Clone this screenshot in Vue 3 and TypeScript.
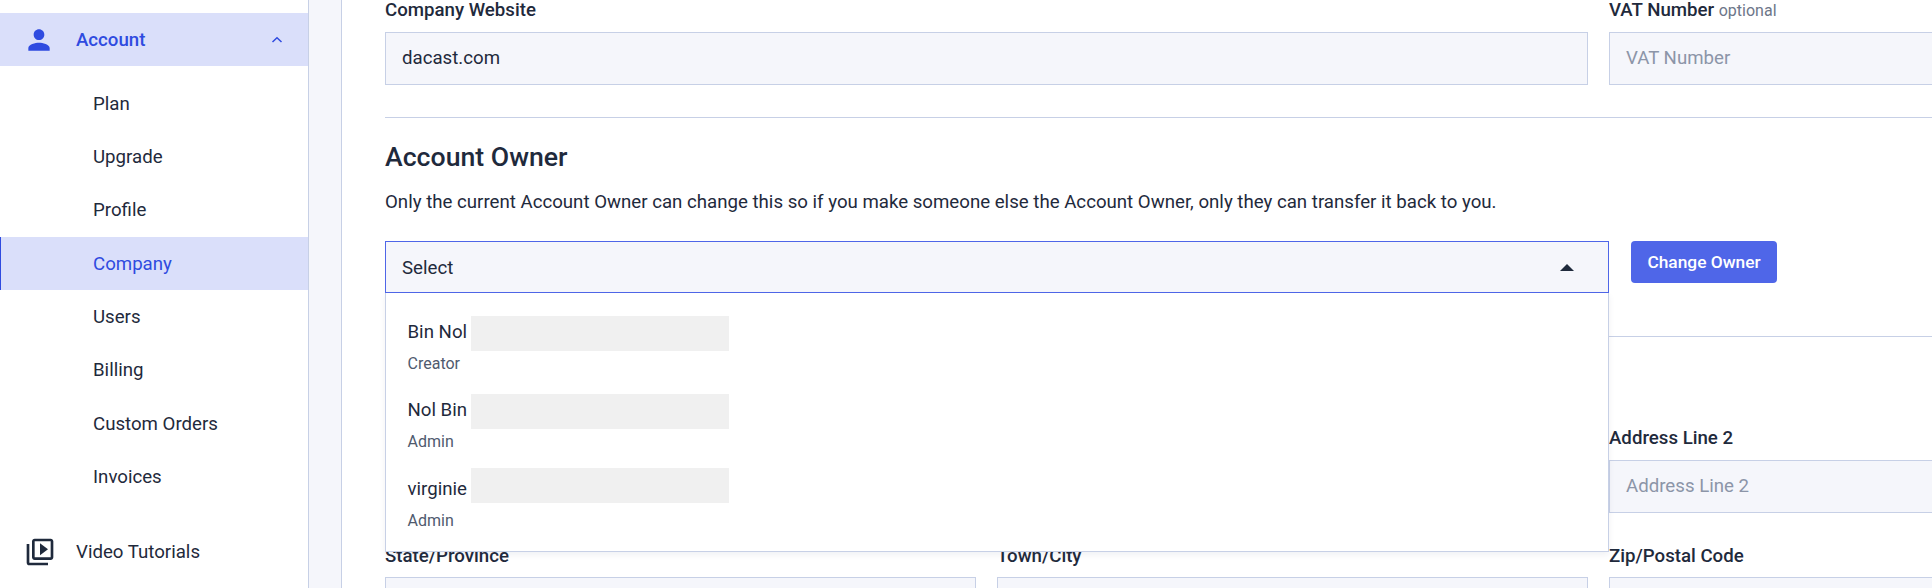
<script setup lang="ts">
const subItems: { label: string; active?: boolean }[] = [
  { label: 'Plan' },
  { label: 'Upgrade' },
  { label: 'Profile' },
  { label: 'Company', active: true },
  { label: 'Users' },
  { label: 'Billing' },
  { label: 'Custom Orders' },
  { label: 'Invoices' },
]
const owners = [
  { name: 'Bin Nol', role: 'Creator' },
  { name: 'Nol Bin', role: 'Admin' },
  { name: 'virginie', role: 'Admin' },
]
</script>

<template>
  <div class="page">
    <aside class="sidebar">
      <div class="nav-head">
        <svg class="nav-icon" viewBox="0 0 24 24" width="32" height="32" fill="#2f4be0"><path d="M12 12c2.210 0 4-1.790 4-4s-1.790-4-4-4-4 1.790-4 4 1.790 4 4 4zm0 2c-2.670 0-8 1.340-8 4v2h16v-2c0-2.660-5.330-4-8-4z" /></svg>
        <span class="nav-head-label">Account</span>
        <svg class="chev" viewBox="0 0 12 8" width="12" height="8" fill="none" stroke="#2f4be0" stroke-width="1.500"><path d="M1.500 6 6 1.800 10.500 6" /></svg>
      </div>
      <div class="sub-list">
        <div v-for="item in subItems" :key="item.label" class="sub" :class="{ 'sub-active': item.active }">{{ item.label }}</div>
      </div>
      <div class="nav-foot">
        <svg class="nav-icon" viewBox="0 0 24 24" width="32" height="32" fill="#1f2a3c"><path d="M4 6H2v14c0 1.100.9 2 2 2h14v-2H4V6zm16-4H8c-1.100 0-2 .9-2 2v12c0 1.100.9 2 2 2h12c1.100 0 2-.9 2-2V4c0-1.100-.9-2-2-2zm0 14H8V4h12v12zM12 5.500v9l6-4.500-6-4.500z" /></svg>
        <span>Video Tutorials</span>
      </div>
    </aside>
    <div class="gutter"></div>
    <main class="main">
      <div class="row">
        <div class="field wide">
          <label class="label">Company Website</label>
          <div class="input">dacast.com</div>
        </div>
        <div class="field rest">
          <label class="label">VAT Number <span class="opt">optional</span></label>
          <div class="input ph">VAT Number</div>
        </div>
      </div>
      <hr class="rule first" />
      <h2 class="title">Account Owner</h2>
      <p class="desc">Only the current Account Owner can change this so if you make someone else the Account Owner, only they can transfer it back to you.</p>
      <div class="owner-row">
        <div class="select-wrap">
          <div class="select">
            <span>Select</span>
            <svg viewBox="0 0 14 7" width="14" height="7" fill="#1f2a3c"><path d="M7 0 14 7H0z" /></svg>
          </div>
          <div class="menu">
            <div v-for="o in owners" :key="o.name" class="opt-item">
              <div class="opt-name">{{ o.name }}</div>
              <div class="opt-role">{{ o.role }}</div>
              <span class="mask"></span>
            </div>
          </div>
        </div>
        <button class="btn">Change Owner</button>
      </div>
      <hr class="rule second" />
      <div class="row addr">
        <div class="field half"></div>
        <div class="field half"></div>
        <div class="field rest">
          <label class="label">Address Line 2</label>
          <div class="input ph">Address Line 2</div>
        </div>
      </div>
      <div class="row last">
        <div class="field half">
          <label class="label">State/Province</label>
          <div class="input"></div>
        </div>
        <div class="field half">
          <label class="label">Town/City</label>
          <div class="input"></div>
        </div>
        <div class="field rest">
          <label class="label">Zip/Postal Code</label>
          <div class="input"></div>
        </div>
      </div>
    </main>
  </div>
</template>

<style>
html, body { margin: 0; background: #fff; overflow: hidden; }
</style>

<style scoped>
.page {
  display: flex;
  width: 1932px;
  height: 588px;
  overflow: hidden;
  font-family: Roboto, "Liberation Sans", sans-serif;
  font-size: 18.670px;
  color: #1f2a3c;
  background: #fff;
}
.sidebar {
  flex: 0 0 309px;
  box-sizing: border-box;
  padding-top: 13px;
  border-right: 1px solid #c7d0e6;
  background: #fff;
}
.gutter {
  flex: 0 0 32px;
  background: #f5f6fb;
  border-right: 1px solid #c7d0e6;
}
.nav-head {
  display: flex;
  align-items: center;
  height: 53px;
  padding-left: 23px;
  background: #dadffa;
  color: #2f4be0;
  font-weight: 500;
}
.nav-icon { flex: none; }
.nav-head-label { margin-left: 21px; flex: 1; }
.chev { margin-right: 25px; }
.sub-list { margin-top: 11px; }
.sub {
  display: flex;
  align-items: center;
  box-sizing: border-box;
  height: 53.330px;
  padding-left: 93px;
}
.sub-active {
  background: #dadffa;
  color: #2f4be0;
  border-left: 1px solid #2f4be0;
  padding-left: 92px;
}
.nav-foot {
  display: flex;
  align-items: center;
  height: 53px;
  margin-top: 22px;
  padding-left: 24px;
}
.nav-foot span { margin-left: 20px; }
.main {
  flex: 1;
  min-width: 0;
  padding-left: 43px;
  box-sizing: border-box;
}
.row { display: flex; gap: 21px; }
.field { display: flex; flex-direction: column; flex: none; }
.wide { width: 1203px; }
.half { width: 591px; }
.rest { flex: 1; margin-right: -100px; }
.label {
  height: 20px;
  line-height: 20px;
  font-weight: 500;
  margin-bottom: 12px;
}
.opt { font-weight: 400; font-size: 16px; color: #6d7689; }
.input {
  box-sizing: border-box;
  height: 53px;
  line-height: 51px;
  padding-left: 16px;
  background: #f5f6fb;
  border: 1px solid #c7d0e6;
}
.ph { color: #8c95a8; }
.rule { margin: 0; border: 0; border-top: 1px solid #c7d0e6; }
.first { margin-top: 32px; }
.title {
  margin: 22px 0 0;
  height: 34px;
  line-height: 34px;
  font-size: 26.670px;
  font-weight: 500;
}
.desc { margin: 16px 0 0; height: 24px; line-height: 24px; }
.owner-row { display: flex; align-items: flex-start; margin-top: 27px; gap: 22px; }
.select-wrap { position: relative; width: 1224px; flex: none; }
.select {
  box-sizing: border-box;
  height: 52px;
  display: flex;
  align-items: center;
  justify-content: space-between;
  padding: 1px 34px 0 16px;
  background: #f5f6fb;
  border: 1px solid #4f66e8;
}
.menu {
  position: absolute;
  left: 0;
  right: 0;
  top: 52px;
  height: 259px;
  box-sizing: border-box;
  padding: 26.500px 0 0 21.500px;
  background: #fff;
  border: 1px solid #c7d0e6;
  border-top: 0;
  box-shadow: 0 3px 6px rgba(60, 75, 120, 0.08);
  z-index: 2;
}
.opt-item { position: relative; height: 78.670px; }
.opt-name { line-height: 24px; }
.opt-role { font-size: 16px; color: #4f5a6e; line-height: 20px; margin-top: 10px; }
.mask {
  position: absolute;
  left: 63.500px;
  top: -4px;
  width: 258px;
  height: 35px;
  background: #f0f0f0;
}
.opt-item:nth-child(3) .mask { top: -9px; }
.btn {
  box-sizing: border-box;
  width: 146px;
  height: 42px;
  padding: 0;
  border: 0;
  border-radius: 4px;
  background: #4f66e8;
  color: #fff;
  font-family: inherit;
  font-size: 17.330px;
  font-weight: 500;
}
.second { margin-top: 43px; }
.addr { margin-top: 91px; }
.last { margin-top: 33px; }
.last .label { margin-bottom: 11px; }
</style>
